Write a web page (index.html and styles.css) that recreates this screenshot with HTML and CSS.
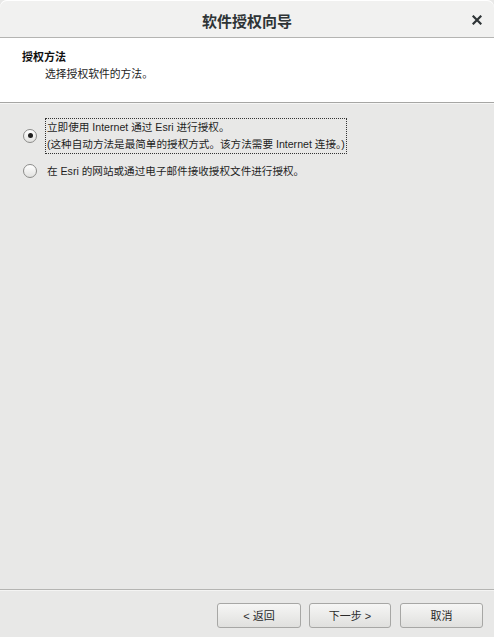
FILE: index.html
```html
<!DOCTYPE html>
<html lang="zh-CN">
<head>
<meta charset="utf-8">
<title>软件授权向导</title>
<link rel="stylesheet" href="styles.css">
</head>
<body>
<div class="window">
  <div class="titlebar">
    <span class="title">软件授权向导</span>
    <span class="close" aria-label="关闭">
      <svg width="10" height="10" viewBox="0 0 10 10"><path d="M1.5 1.5 L8.5 8.5 M8.5 1.5 L1.5 8.5" stroke="#2e3436" stroke-width="2.2" stroke-linecap="square" fill="none"/></svg>
    </span>
  </div>
  <div class="header">
    <div class="header-title">授权方法</div>
    <div class="header-sub">选择授权软件的方法。</div>
  </div>
  <div class="content">
    <div class="option">
      <span class="radio checked"></span>
      <span class="label focused">立即使用 Internet 通过 Esri 进行授权。<br>(这种自动方法是最简单的授权方式。该方法需要 Internet 连接。)</span>
    </div>
    <div class="option">
      <span class="radio"></span>
      <span class="label">在 Esri 的网站或通过电子邮件接收授权文件进行授权。</span>
    </div>
  </div>
  <div class="footer">
    <button class="btn btn-back">&lt; 返回</button>
    <button class="btn btn-next">下一步 &gt;</button>
    <button class="btn btn-cancel">取消</button>
  </div>
</div>
</body>
</html>
```

FILE: styles.css
```css
html, body {
  margin: 0;
  padding: 0;
  background: #e8e8e7;
}
body {
  font-family: "Liberation Sans", "Noto Sans CJK SC", sans-serif;
  font-size: 11px;
  color: #2a2a2a;
}
.window {
  width: 494px;
  height: 637px;
  display: flex;
  flex-direction: column;
  background: #e8e8e7;
}
.titlebar {
  height: 37px;
  flex: none;
  background: #f1f1f0;
  border-bottom: 1px solid #b4b4b2;
  border-radius: 7px 7px 0 0;
  box-shadow: inset 0 1px 0 #ffffff;
  display: flex;
  align-items: center;
  justify-content: center;
  position: relative;
}
.title {
  font-family: "Noto Sans CJK SC", sans-serif;
  font-size: 15px;
  font-weight: 700;
  color: #2e3436;
  line-height: 20px;
  padding-top: 5px;
}
.close {
  position: absolute;
  right: 12px;
  top: 15px;
  width: 10px;
  height: 10px;
  display: flex;
}
.header {
  flex: none;
  height: 65px;
  box-sizing: border-box;
  background: #ffffff;
  border-bottom: 1px solid #a6a6a4;
  padding: 11px 0 0 22px;
  line-height: 17px;
}
.header-title {
  font-weight: 700;
  color: #111;
}
.header-sub {
  padding-left: 23px;
  font-size: 10.8px;
  color: #1e1e1e;
}
.content {
  flex: 1;
  padding: 14px 0 0 23px;
  display: flex;
  flex-direction: column;
  gap: 8px;
  border-top: 1px solid #f6f6f5;
}
.option {
  display: flex;
  align-items: center;
  gap: 8px;
}
.radio {
  width: 12px;
  height: 12px;
  margin-top: -1px;
  border: 1px solid #8c8c8a;
  border-radius: 50%;
  background: linear-gradient(#ffffff, #e2e2e0);
  display: flex;
  align-items: center;
  justify-content: center;
  flex: none;
}
.radio.checked::after {
  content: "";
  width: 5px;
  height: 5px;
  border-radius: 50%;
  background: #1e1e1e;
}
.label {
  font-size: 10.6px;
  line-height: 17px;
  color: #1e1e1e;
  border: 1px dotted transparent;
  padding: 0 1px;
}
.label.focused {
  border-color: #333;
}
.footer {
  flex: none;
  height: 48px;
  box-sizing: border-box;
  border-top: 1px solid #b4b4b2;
  box-shadow: inset 0 1px 0 #f4f4f3;
  display: flex;
  justify-content: flex-end;
  padding: 13px 11px 0 0;
}
.btn {
  height: 25px;
  box-sizing: border-box;
  border: 1px solid #a7a7a5;
  border-radius: 3px;
  background: linear-gradient(#f6f6f5, #e0e0de);
  font-family: inherit;
  font-size: 11px;
  color: #2a2a2a;
  padding: 0;
  line-height: 22px;
}
.btn-back {
  width: 84px;
}
.btn-next {
  width: 82px;
  margin-left: 8px;
}
.btn-cancel {
  width: 83px;
  margin-left: 9px;
}
```
